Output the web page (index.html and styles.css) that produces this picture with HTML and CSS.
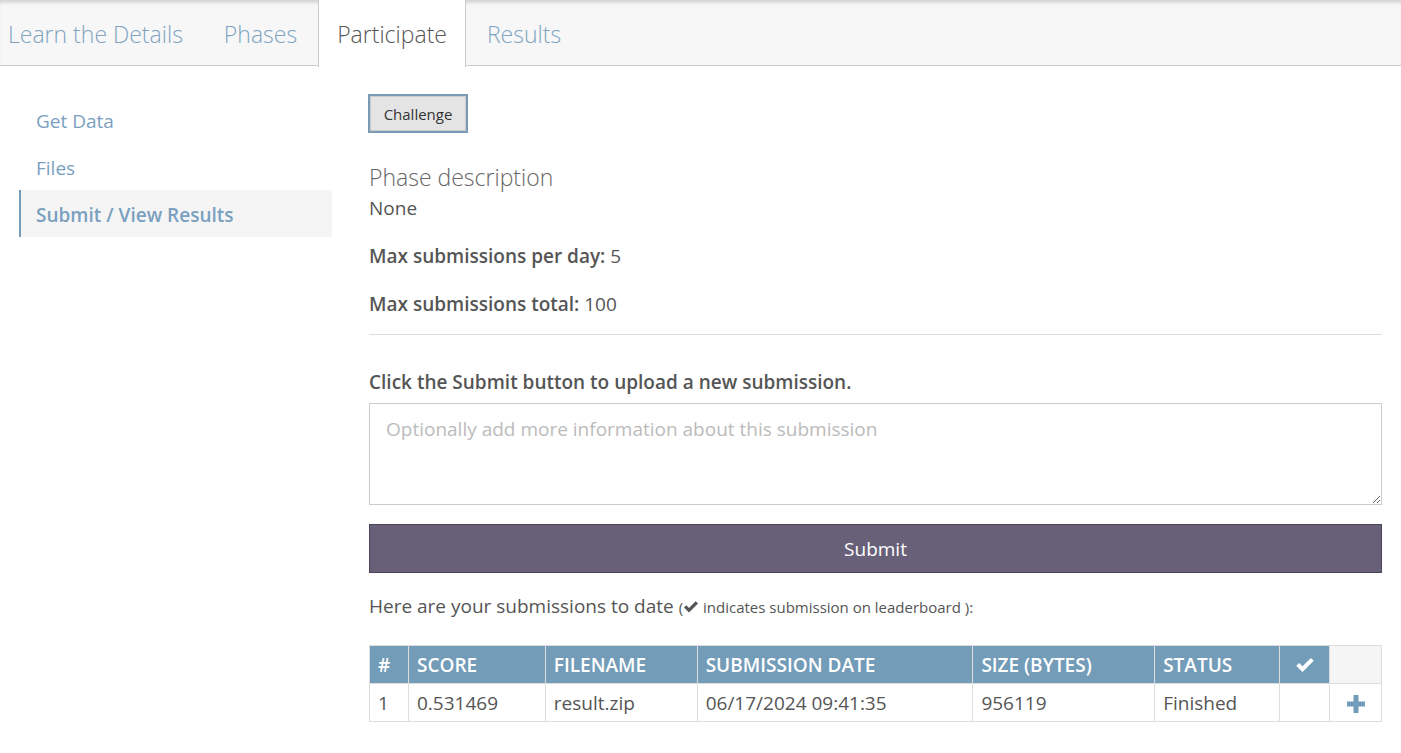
FILE: index.html
```html
<!DOCTYPE html>
<html lang="en">
<head>
<meta charset="utf-8">
<title>Participate</title>
<link rel="stylesheet" href="styles.css">
</head>
<body>
<nav class="tabs">
  <a class="tab first">Learn the Details</a>
  <a class="tab">Phases</a>
  <a class="tab active">Participate</a>
  <a class="tab">Results</a>
</nav>
<div class="page">
  <aside class="sidebar">
    <a class="side-item">Get Data</a>
    <a class="side-item">Files</a>
    <a class="side-item active">Submit / View Results</a>
  </aside>
  <main class="main">
    <button class="phase-btn">Challenge</button>
    <h3 class="phase-title">Phase description</h3>
    <p class="phase-desc">None</p>
    <p class="stat"><b>Max submissions per day:</b> 5</p>
    <p class="stat"><b>Max submissions total:</b> 100</p>
    <hr class="rule">
    <p class="upload-label">Click the Submit button to upload a new submission.</p>
    <textarea class="notes" placeholder="Optionally add more information about this submission"></textarea>
    <button class="submit-btn">Submit</button>
    <p class="subs-intro">Here are your submissions to date <span class="small">(<svg class="inline-check" viewBox="0 0 16 14"><path d="M1 7.6 L3.3 5.3 L6 8 L12.7 1.3 L15 3.6 L6 12.6 Z" fill="#555"/></svg> indicates submission on leaderboard ):</span></p>
    <table class="subs">
      <thead>
        <tr>
          <th class="c-num">#</th>
          <th class="c-score">SCORE</th>
          <th class="c-file">FILENAME</th>
          <th class="c-date">SUBMISSION DATE</th>
          <th class="c-size">SIZE (BYTES)</th>
          <th class="c-status">STATUS</th>
          <th class="c-check"><svg class="head-check" viewBox="0 0 16 14"><path d="M1 7.6 L3.3 5.3 L6 8 L12.7 1.3 L15 3.6 L6 12.6 Z" fill="#fff"/></svg></th>
          <th class="c-plus empty"></th>
        </tr>
      </thead>
      <tbody>
        <tr>
          <td>1</td>
          <td>0.531469</td>
          <td>result.zip</td>
          <td>06/17/2024 09:41:35</td>
          <td>956119</td>
          <td>Finished</td>
          <td></td>
          <td class="plus-cell"><svg class="plus" viewBox="0 0 18 18"><path d="M6.5 0 H11.5 V6.5 H18 V11.5 H11.5 V18 H6.5 V11.5 H0 V6.5 H6.5 Z" fill="#739cb8"/></svg></td>
        </tr>
      </tbody>
    </table>
  </main>
</div>
</body>
</html>
```

FILE: styles.css
```css
* { box-sizing: border-box; }
html, body { margin: 0; padding: 0; background: #fff; }
body {
  font-family: "Open Sans", "Noto Sans", "Liberation Sans", sans-serif;
  color: #555;
  font-size: 19px;
}

.tabs {
  display: flex;
  height: 66px;
  background: #f7f7f7;
  border-bottom: 1px solid #ccc;
  box-shadow: inset 0 4px 4px -2px rgba(0,0,0,0.18);
}
.tab {
  display: block;
  padding: 0 20px;
  margin-right: 1px;
  height: 66px;
  line-height: 68px;
  font-size: 23px;
  font-weight: 300;
  color: #7fa4c2;
  white-space: nowrap;
}
.tab.first { padding-left: 8px; }
.tab.active {
  background: #fff;
  color: #555;
  border-left: 1px solid #ccc;
  border-right: 1px solid #ccc;
  height: 67px;
  padding: 0 18px;
  box-shadow: none;
}

.page {
  display: flex;
  padding: 0 19px;
  gap: 37px;
}
.sidebar {
  width: 313px;
  flex: none;
  padding-top: 30px;
  display: flex;
  flex-direction: column;
}
.side-item {
  display: block;
  height: 47px;
  padding-top: 4px;
  line-height: 43px;
  padding-left: 15px;
  border-left: 2px solid transparent;
  color: #7aa0bf;
  font-size: 19px;
}
.side-item.active {
  background: #f5f5f5;
  border-left-color: #739cb8;
  font-weight: 600;
}

.main {
  flex: 1;
  padding-top: 28px;
  display: flex;
  flex-direction: column;
  align-items: flex-start;
}
.phase-btn {
  width: 100px;
  height: 39px;
  background: #e4e4e4;
  border: 2px solid #7a9ab5;
  box-shadow: inset 0 0 0 1px #ccc;
  font-family: "Open Sans", "Noto Sans", sans-serif;
  font-size: 15px;
  color: #333;
  padding: 0;
  margin-left: -1px;
}
.phase-title {
  margin: 31px 0 0;
  font-size: 23px;
  font-weight: 300;
  line-height: 26px;
  color: #666;
}
.phase-desc {
  margin: 6px 0 0;
  line-height: 25px;
}
.stat {
  margin: 23px 0 0;
  line-height: 25px;
}
.stat b { font-weight: 600; }
.rule {
  align-self: stretch;
  margin: 17px 0 0;
  border: 0;
  border-top: 1px solid #ddd;
  height: 0;
}
.upload-label {
  margin: 35px 0 0;
  line-height: 25px;
  font-weight: 600;
}
.notes {
  align-self: stretch;
  margin-top: 8px;
  height: 102px;
  border: 1px solid #ccc;
  padding: 12px 16px;
  font-family: "Open Sans", "Noto Sans", sans-serif;
  font-size: 19px;
  color: #555;
  resize: both;
}
.notes::placeholder { color: #bbb; }
.submit-btn {
  align-self: stretch;
  margin-top: 19px;
  height: 49px;
  background: #676078;
  border: 1px solid #4a4558;
  color: #fff;
  font-family: "Open Sans", "Noto Sans", sans-serif;
  font-size: 19px;
  padding: 0;
}
.subs-intro {
  margin: 21px 0 0;
  line-height: 25px;
}
.small { font-size: 15px; }
.inline-check { width: 16px; height: 14px; vertical-align: -1px; }

.subs {
  align-self: stretch;
  margin-top: 25px;
  border-collapse: collapse;
  font-size: 19px;
}
.subs th, .subs td {
  border: 1px solid #ddd;
  height: 38px;
  padding: 0 8px;
  text-align: left;
  white-space: nowrap;
}
.subs th {
  background: #739cb8;
  color: #fff;
  font-weight: 600;
  border-color: #ddd;
}
.subs th.empty { background: #f5f5f5; }
.subs td { color: #555; }
.c-num { width: 39px; }
.c-score { width: 137px; }
.c-file { width: 152px; }
.c-date { width: 276px; }
.c-size { width: 182px; }
.c-status { width: 125px; }
.c-check { width: 50px; text-align: center !important; }
.c-plus { width: 52px; }
.head-check { width: 20px; height: 18px; display: block; margin: 0 auto; }
.plus-cell { text-align: center !important; }
.plus { width: 18px; height: 18px; vertical-align: middle; }
```
